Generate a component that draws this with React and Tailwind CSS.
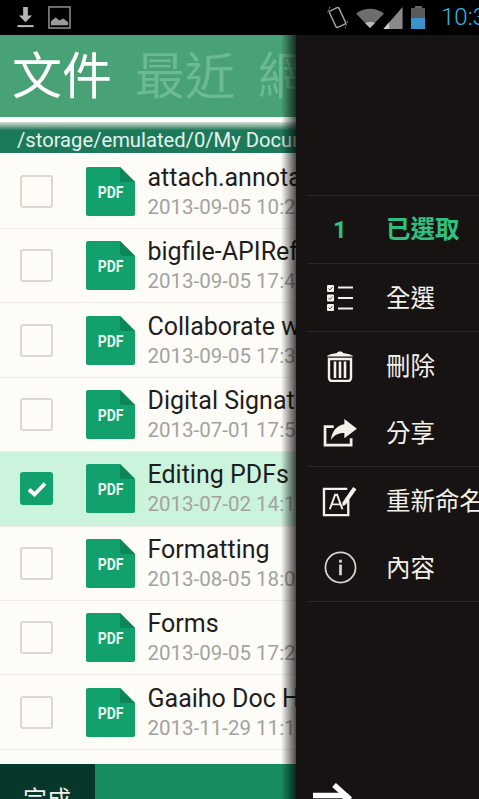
const cjk = "font-['Roboto','Noto_Sans_CJK_TC',sans-serif]";

const rows = [
  ["attach.annotations.pdf", "2013-09-05 10:24"],
  ["bigfile-APIReference.pdf", "2013-09-05 17:45"],
  ["Collaborate with Others", "2013-09-05 17:36"],
  ["Digital Signatures.pdf", "2013-07-01 17:52"],
  ["Editing PDFs", "2013-07-02 14:16", true],
  ["Formatting", "2013-08-05 18:00"],
  ["Forms", "2013-09-05 17:28"],
  ["Gaaiho Doc Help", "2013-11-29 11:12"],
];

function PdfIcon() {
  return (
    <div className="relative w-[49px] h-[49px] shrink-0">
      <svg viewBox="0 0 49 49" className="w-full h-full block">
        <path d="M2 0H34L49 15V47a2 2 0 0 1-2 2H2a2 2 0 0 1-2-2V2a2 2 0 0 1 2-2Z" fill="#12a06c" />
        <path d="M34 0L49 15H37a3 3 0 0 1-3-3Z" fill="#0c8558" />
      </svg>
      <span className="absolute left-0 right-0 top-[15px] text-center text-[17px] leading-[20px] font-bold text-[#e4f5ec] font-['Roboto',sans-serif] scale-x-[0.82]">PDF</span>
    </div>
  );
}

function Row({ title, date, selected }) {
  return (
    <div className={`h-[74.4px] shrink-0 flex items-center border-b border-[#eeebe5] ${selected ? "bg-[#ccf3dc]" : "bg-[#fefcf7]"}`}>
      <div className="w-[86px] pl-[20px] shrink-0">
        {selected ? (
          <div className="w-[33px] h-[33px] rounded-[3px] bg-[#12a06c] flex items-center justify-center">
            <svg viewBox="0 0 20 16" className="w-[20px] h-[16px]"><path d="M2 8.5L7.5 13.5L18 2.5" fill="none" stroke="#fff" strokeWidth="3.8" /></svg>
          </div>
        ) : (
          <div className="w-[33px] h-[33px] rounded-[3px] border-2 border-[#dbd8d0]" />
        )}
      </div>
      <PdfIcon />
      <div className="ml-[12.5px] min-w-0 whitespace-nowrap font-['Roboto',sans-serif]">
        <div className="text-[25px] leading-[30px] text-[#1e1e1e]">{title}</div>
        <div className="text-[20.5px] leading-[25px] mt-[2px] text-[#a3a3a0]">{date}</div>
      </div>
    </div>
  );
}

function MenuRow({ icon, label, border = true }) {
  return (
    <div className={`h-[67.5px] flex items-center ml-[11px] whitespace-nowrap ${border ? "border-b border-[#2b2725]" : ""}`}>
      <div className="w-[66px] pt-[1px] flex justify-center shrink-0">{icon}</div>
      <span className={`ml-[13px] pt-[3px] text-[24.5px] leading-[34px] text-[#f2f0ea] ${cjk}`}>{label}</span>
    </div>
  );
}

const c = "#f4f1ea";

const ChecklistIcon = (
  <svg viewBox="0 0 28 28" className="w-[28px] h-[28px]">
    <rect x="1" y="1" width="7" height="7" rx="1" fill={c} />
    <rect x="1" y="10.5" width="7" height="7" rx="1" fill={c} />
    <rect x="1" y="20" width="7" height="7" rx="1" fill={c} />
    <path d="M2.5 4.5l1.5 1.5 2.5-3M2.5 14l1.5 1.5 2.5-3M2.5 23.5l1.5 1.5 2.5-3" stroke="#555" strokeWidth="1" fill="none" />
    <path d="M12 3.5H27M12 14H27M12 24.5H27" stroke={c} strokeWidth="2.2" />
  </svg>
);
const TrashIcon = (
  <svg viewBox="0 0 28 32" className="w-[28px] h-[32px]">
    <path d="M0.5 6.5C3 4 8 3.5 11 3C11 1 17 1 17 3C20 3.5 25 4 27.5 6.5Z" fill={c} />
    <path d="M3 9H25V28a3 3 0 0 1-3 3H6a3 3 0 0 1-3-3Z" fill="none" stroke={c} strokeWidth="2.4" />
    <path d="M9 11.5V28M14 11.5V28M19 11.5V28" stroke={c} strokeWidth="2.6" />
  </svg>
);
const ShareIcon = (
  <svg viewBox="0 0 36 30" className="w-[35px] h-[29px]">
    <path d="M11 9H2V28H29V21" fill="none" stroke={c} strokeWidth="2.8" />
    <path d="M22 1L35 11L22 21V15.5C15 15.5 11 18 8 23C9 14 14 7.5 22 6.5Z" fill={c} />
  </svg>
);
const RenameIcon = (
  <svg viewBox="0 0 37 34" className="w-[36px] h-[33px]">
    <path d="M26 5H2V32H27V16" fill="none" stroke={c} strokeWidth="2.4" />
    <path d="M8 26L13.5 11H15.5L21 26M10 21H19" fill="none" stroke={c} strokeWidth="2" />
    <path d="M21 19L32 3L35.5 5.5L24.5 21L21 23Z" fill={c} />
  </svg>
);
const InfoIcon = (
  <svg viewBox="0 0 34 34" className="w-[33px] h-[33px]">
    <circle cx="17" cy="17" r="15.5" fill="none" stroke="#d8d5ce" strokeWidth="1.8" />
    <rect x="15.6" y="14" width="2.8" height="11" fill="#d8d5ce" />
    <rect x="15.6" y="9" width="2.8" height="3" fill="#d8d5ce" />
  </svg>
);

export default function App() {
  return (
    <div className="w-[479px] h-[799px] overflow-hidden flex flex-col bg-black">
      {/* status bar */}
      <div className="h-[35px] shrink-0 bg-black flex items-center overflow-hidden">
        <svg viewBox="0 0 18 24" className="ml-[17px] w-[17px] h-[23px] shrink-0">
          <path d="M6.5 1H11.5V10H16L9 17L2 10H6.5Z" fill="#b5b5b5" />
          <rect x="0.5" y="20" width="17" height="2.2" fill="#b5b5b5" />
        </svg>
        <svg viewBox="0 0 24 24" className="ml-[14px] w-[23px] h-[23px] shrink-0">
          <rect x="1" y="1" width="22" height="22" fill="none" stroke="#8d8d8d" strokeWidth="1.6" />
          <path d="M3 20V16L8 12L12 15L16 13L21 17V20Z" fill="#9a9a9a" />
        </svg>
        <svg viewBox="0 0 22 24" className="ml-[256px] w-[21px] h-[23px] shrink-0">
          <rect x="5.5" y="2.5" width="11" height="19" rx="1.5" transform="rotate(-25 11 12)" fill="none" stroke="#a5a5a5" strokeWidth="1.5" />
          <path d="M3 1L0.5 7M21.5 16L19 23" stroke="#777" strokeWidth="1.2" strokeDasharray="2 1" />
        </svg>
        <svg viewBox="0 0 28 20" className="ml-[8px] w-[28px] h-[20px] shrink-0">
          <path d="M0 5.5C8-1 20-1 28 5.5L14 20Z" fill="#6e6e6e" />
          <path d="M9 15C11 13.5 17 13.5 19 15L14 20Z" fill="#bbb" />
        </svg>
        <svg viewBox="0 0 20 24" className="-ml-[1px] w-[20px] h-[23px] shrink-0">
          <path d="M0 24L20 1V24Z" fill="#8a8a8a" />
          <path d="M0 24L6 17V24Z" fill="#d0d0d0" />
        </svg>
        <div className="ml-[8px] w-[14px] h-[23px] shrink-0 flex flex-col">
          <div className="mx-auto w-[7px] h-[2px] bg-[#666]" />
          <div className="h-[10px] bg-[#5a5a5a]" />
          <div className="flex-1 bg-[#3a94c9]" />
        </div>
        <span className="ml-[16px] text-[24px] leading-[35px] font-light text-[#33b5e5] font-['Roboto',sans-serif] whitespace-nowrap shrink-0">10:36</span>
      </div>

      <div className="flex-1 min-h-0 flex">
        {/* left column */}
        <div className="w-[296px] shrink-0 relative overflow-hidden flex flex-col bg-[#fefcf7]">
          <div className={`h-[82px] shrink-0 bg-[#48a275] flex items-center pl-[12px] pt-[2px] gap-[23px] whitespace-nowrap ${cjk}`}>
            <span className="text-[50px] leading-[60px] text-white">文件</span>
            <span className="text-[50px] leading-[60px] text-[#6cba92]">最近</span>
            <span className="text-[50px] leading-[60px] text-[#6cba92]">網路</span>
          </div>
          <div className="h-[5px] shrink-0 bg-white" />
          <div className="h-[8px] shrink-0 bg-linear-to-b from-[#d8e2dc] to-[#1f7a5c]" />
          <div className="h-[23px] shrink-0 bg-[#1c7a5b] pl-[17px] text-[20.2px] leading-[20px] text-[#e8f2ec] whitespace-nowrap font-['Roboto',sans-serif]">/storage/emulated/0/My Documents</div>
          <div className="flex-1 min-h-0 overflow-hidden pt-[1.6px]">
            {rows.map(([t, d, s]) => <Row key={t} title={t} date={d} selected={s} />)}
          </div>
          <div className="h-[35px] shrink-0 bg-[#178c60] flex">
            <div className={`w-[95px] bg-[#06372b] pl-[23px] pt-[20px] text-[24px] leading-[32px] text-[#f2f0ea] whitespace-nowrap ${cjk}`}>完成</div>
          </div>
          <div className="absolute top-0 bottom-0 right-0 w-[15px] bg-linear-to-l from-black/70 to-transparent" />
        </div>

        {/* drawer */}
        <div className="flex-1 min-w-0 overflow-hidden bg-[#171312] flex flex-col pt-[160px]">
          <div className="ml-[11px] border-t border-[#2b2725]" />
          <div className="h-[68px] flex items-center ml-[11px] whitespace-nowrap border-b border-[#2b2725]">
            <div className="w-[66px] flex justify-center shrink-0 text-[24px] leading-[30px] font-bold text-[#2fc081] font-['Roboto',sans-serif]">1</div>
            <span className={`ml-[13px] text-[24.5px] leading-[34px] font-bold text-[#2fc081] ${cjk}`}>已選取</span>
          </div>
          <MenuRow icon={ChecklistIcon} label="全選" />
          <MenuRow icon={TrashIcon} label="刪除" border={false} />
          <MenuRow icon={ShareIcon} label="分享" />
          <MenuRow icon={RenameIcon} label="重新命名" border={false} />
          <MenuRow icon={InfoIcon} label="內容" />
          <div className="mt-auto h-[16px] pl-[17px] overflow-hidden shrink-0">
            <svg viewBox="0 0 42 32" className="w-[42px] h-[32px]">
              <path d="M0 12.5H31M21 2L35 14.5L21 27" fill="none" stroke="#fff" strokeWidth="5.5" />
            </svg>
          </div>
        </div>
      </div>
    </div>
  );
}
